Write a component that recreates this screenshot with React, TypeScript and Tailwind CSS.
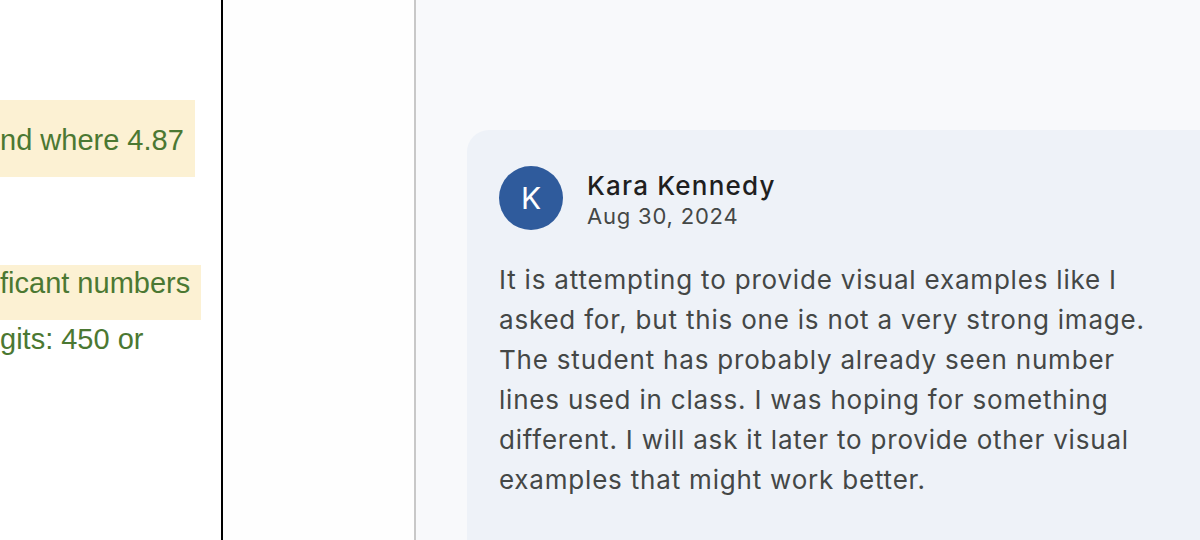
export default function App() {
  const sans = { fontFamily: '"Liberation Sans", Arial, sans-serif' };
  const body = { fontFamily: 'Inter, Roboto, sans-serif' };
  return (
    <div className="flex w-[1200px] h-[540px] overflow-hidden bg-white">
      {/* Left document column */}
      <div className="w-[221px] shrink-0 overflow-hidden bg-white text-[29px] text-[#4b7832]" style={sans}>
        <div className="mt-[100px] h-[77px] w-[195px] bg-[#fcf1d3] pt-[24px] leading-[32px] whitespace-nowrap">
          nd where 4.87
        </div>
        <div className="mt-[88px] h-[55px] w-[201px] bg-[#fcf1d3] pt-[2px] leading-[32px] whitespace-nowrap">
          ficant numbers
        </div>
        <div className="mt-[3px] leading-[32px] whitespace-nowrap">gits: 450 or</div>
      </div>
      {/* Divider */}
      <div className="w-[2px] shrink-0 bg-black" />
      {/* Middle blank column */}
      <div className="w-[191px] shrink-0 bg-[#fefefe]" />
      <div className="w-[2px] shrink-0 bg-[#c8c8c8]" />
      {/* Right comments area */}
      <div className="flex-1 overflow-hidden bg-[#f8f9fb]">
        <div className="ml-[51px] mt-[130px] w-[800px] h-[460px] rounded-[22px] bg-[#eef2f8] pl-[32px] pt-[36px]" style={body}>
          <div className="flex items-start gap-[24px]">
            <div className="flex h-[64px] w-[64px] items-center justify-center rounded-full bg-[#2f5b9c] text-[30px] text-white">
              K
            </div>
            <div className="pt-[4px]">
              <div className="text-[26px] leading-[32px] font-medium tracking-[1.2px] text-[#1f1f1f]">Kara Kennedy</div>
              <div className="text-[22px] leading-[28px] tracking-[0.8px] text-[#444746]">Aug 30, 2024</div>
            </div>
          </div>
          <p className="mt-[30px] w-[720px] text-[26px] leading-[40px] tracking-[0.8px] text-[#444746]">
            It is attempting to provide visual examples like I
            <br />
            asked for, but this one is not a very strong image.
            <br />
            The student has probably already seen number
            <br />
            lines used in class. I was hoping for something
            <br />
            different. I will ask it later to provide other visual
            <br />
            examples that might work better.
          </p>
        </div>
      </div>
    </div>
  );
}
